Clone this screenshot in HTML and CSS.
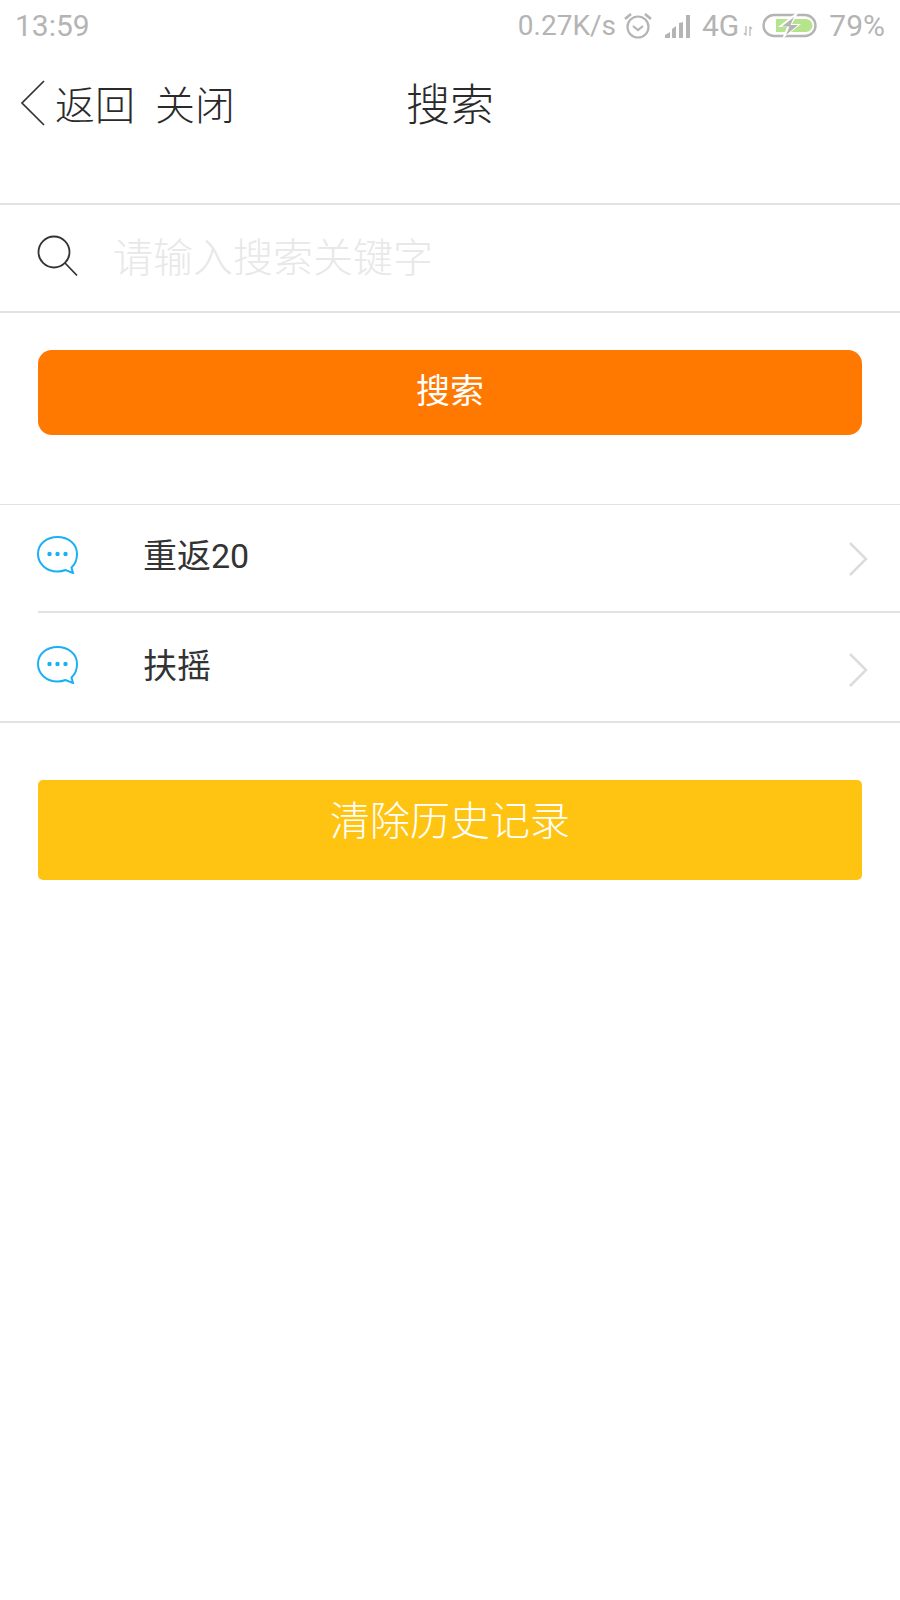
FILE: index.html
```html
<!DOCTYPE html>
<html lang="zh">
<head>
<meta charset="utf-8">
<title>搜索</title>
<link rel="stylesheet" href="styles.css">
</head>
<body>
<div class="status">
  <span class="time">13:59</span>
  <div class="status-right">
    <span class="speed">0.27K/s</span>
    <svg class="alarm" width="30" height="28" viewBox="0 0 30 28" fill="none" stroke="#b4b4b4" stroke-width="2.2"><circle cx="15" cy="15" r="10.500"/><path d="M10 14l5 4 5-4"/><path d="M2 7l6-5M28 7l-6-5" stroke-width="2.6"/></svg>
    <svg class="signal" width="28" height="24" viewBox="0 0 28 24" fill="#b4b4b4"><path d="M1 24v-3l5-3v6zM8 24v-9l4-3v12zM15 24V9l4-1v16zM22 24V1h4v23z"/></svg>
    <span class="net">4G</span>
    <svg class="arrows" width="10" height="12" viewBox="0 0 10 12" fill="none" stroke="#b4b4b4" stroke-width="1.2"><path d="M3 1v9M1 8l2 2.500M7 11V2M9 4L7 1.500"/></svg>
    <svg class="battery" width="56" height="26" viewBox="0 0 56 26"><rect x="1.500" y="2" width="52" height="21" rx="10.500" fill="none" stroke="#b4b4b4" stroke-width="2.400"/><path d="M14 6h30a6.500 6.500 0 0 1 0 13H14z" fill="#b5e48c"/><path d="M34 0L16 14h9l-5 12 19-15h-9l6-11z" fill="#fff"/><path d="M32 4L20 13.500h7.500L24 22l12-10h-7.500L32 4z" fill="#b4b4b4"/></svg>
    <span class="pct">79%</span>
  </div>
</div>

<header class="nav">
  <div class="nav-left">
    <svg class="back" width="26" height="46" viewBox="0 0 26 46" fill="none" stroke="#333" stroke-width="1.700"><path d="M24 1L2 23l22 22"/></svg>
    <span>返回</span>
    <span class="close">关闭</span>
  </div>
  <h1 class="title">搜索</h1>
</header>

<div class="search-row">
  <svg class="search-icon" width="42" height="42" viewBox="0 0 42 42" fill="none" stroke="#333" stroke-width="1.800"><circle cx="17" cy="17" r="15.500"/><path d="M28 28l12 12.500"/></svg>
  <span class="placeholder">请输入搜索关键字</span>
</div>

<button class="btn-search">搜索</button>

<ul class="history">
  <li class="item">
    <svg class="bubble" width="41" height="38" viewBox="0 0 41 38"><path d="M20.500 1C9.500 1 1 8 1 18s8.500 17.500 19.500 17.500c3 0 5.500-.5 8-1.500l7.500 3-1.500-5.500C38.500 28 40 23.500 40 18 40 8 31.500 1 20.500 1z" fill="none" stroke="#1ab0f5" stroke-width="2"/><circle cx="12.500" cy="18" r="2.200" fill="#1ab0f5"/><circle cx="20.500" cy="18" r="2.200" fill="#1ab0f5"/><circle cx="28.500" cy="18" r="2.200" fill="#1ab0f5"/></svg>
    <span class="label">重返20</span>
    <svg class="chevron" width="20" height="34" viewBox="0 0 20 34" fill="none" stroke="#dcdcdc" stroke-width="2.500"><path d="M2 1l16 16L2 33"/></svg>
  </li>
  <li class="item">
    <svg class="bubble" width="41" height="38" viewBox="0 0 41 38"><path d="M20.500 1C9.500 1 1 8 1 18s8.500 17.500 19.500 17.500c3 0 5.500-.5 8-1.500l7.500 3-1.500-5.500C38.500 28 40 23.500 40 18 40 8 31.500 1 20.500 1z" fill="none" stroke="#1ab0f5" stroke-width="2"/><circle cx="12.500" cy="18" r="2.200" fill="#1ab0f5"/><circle cx="20.500" cy="18" r="2.200" fill="#1ab0f5"/><circle cx="28.500" cy="18" r="2.200" fill="#1ab0f5"/></svg>
    <span class="label">扶摇</span>
    <svg class="chevron" width="20" height="34" viewBox="0 0 20 34" fill="none" stroke="#dcdcdc" stroke-width="2.500"><path d="M2 1l16 16L2 33"/></svg>
  </li>
</ul>

<button class="btn-clear">清除历史记录</button>
</body>
</html>
```
FILE: styles.css
```css
* { box-sizing: border-box; }
html, body { margin: 0; padding: 0; background: #fff; }
body {
  width: 900px;
  height: 1600px;
  overflow: hidden;
  font-family: "Roboto", "Noto Sans CJK SC", sans-serif;
  font-weight: 300;
  color: #2a2a2a;
}
.status {
  height: 52px;
  display: flex;
  align-items: center;
  justify-content: space-between;
  padding: 0 15px;
  color: #b4b4b4;
  font-size: 30px;
  font-weight: 400;
  line-height: 52px;
}
.status-right { display: flex; align-items: center; }
.speed { font-size: 28px; }
.alarm { margin-left: 7px; }
.signal { margin-left: 11px; }
.net { margin-left: 10px; }
.arrows { margin: 10px 0 0 4px; }
.battery { margin-left: 9px; }
.pct { margin-left: 11px; }
.nav {
  height: 153px;
  border-bottom: 2px solid #e2e2e2;
  position: relative;
  padding: 0 0 0 20px;
}
.nav-left {
  display: flex;
  align-items: flex-start;
  font-size: 40px;
  line-height: 52px;
  padding-top: 29px;
}
.back { margin: -1px 9px 0 0; }
.close { margin-left: 20px; }
.title {
  position: absolute;
  left: 0;
  right: 0;
  top: 24px;
  margin: 0;
  text-align: center;
  font-size: 44px;
  font-weight: 300;
  line-height: 60px;
}
.search-row {
  height: 108px;
  border-bottom: 2px solid #e2e2e2;
  display: flex;
  align-items: center;
  padding-left: 37px;
}
.search-icon { margin: 0 34px 4px 0; }
.placeholder { font-size: 40px; color: #e8e8e8; line-height: 56px; padding-top: 2px; }
button {
  display: block;
  border: 0;
  color: #fff;
  font-family: inherit;
  font-weight: 400;
  width: 824px;
  margin-left: 38px;
  padding: 0;
}
.btn-search {
  margin-top: 37px;
  height: 85px;
  background: #ff7800;
  border-radius: 14px;
  font-size: 34px;
  padding-bottom: 8px;
}
.history {
  list-style: none;
  margin: 69px 0 0;
  padding: 0;
  border-top: 1px solid #e2e2e2;
  border-bottom: 2px solid #e2e2e2;
}
.item {
  position: relative;
  height: 108px;
  margin-left: 38px;
  display: flex;
  align-items: center;
  border-bottom: 2px solid #e2e2e2;
}
.item:last-child { border-bottom: 0; }
.bubble { flex: none; margin: 0 0 6px -1px; }
.item:last-child .bubble { margin-bottom: 4px; }
.label { margin-left: 65px; font-size: 34px; font-weight: 400; color: #333; flex: 1; padding-bottom: 10px; }
.item:last-child .label { padding-bottom: 8px; }
.chevron { margin-right: 32px; margin-top: 1px; }
.item:last-child .chevron { margin-top: 5px; }
.btn-clear {
  margin-top: 57px;
  height: 100px;
  background: #ffc412;
  border-radius: 5px;
  font-size: 40px;
  font-weight: 300;
  padding-bottom: 24px;
}
```
